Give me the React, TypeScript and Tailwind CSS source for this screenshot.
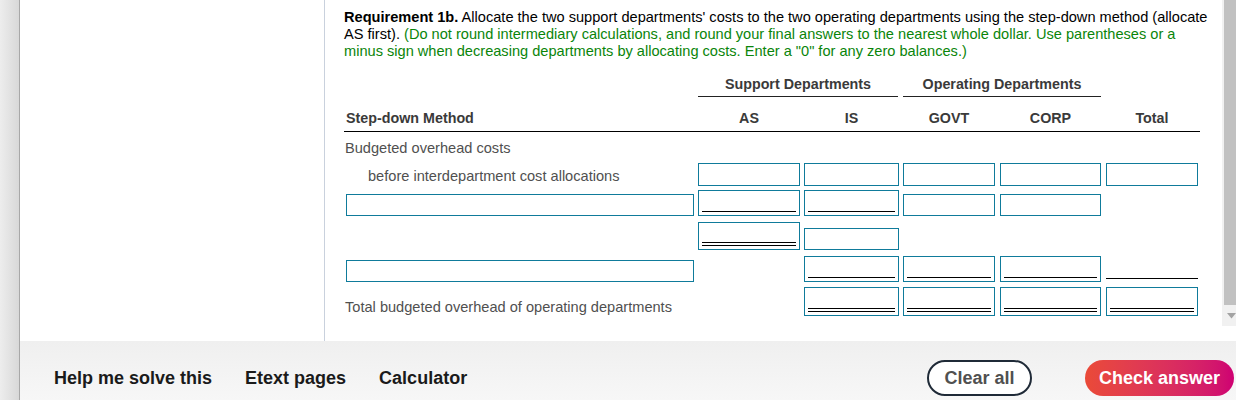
import React from "react";

const font = { fontFamily: '"Liberation Sans", Arial, sans-serif' };

// column widths, measured from left edge of table
const COLS = {
  label: "w-[354px]",
  as: "w-[106px]",
  is: "w-[99px]",
  govt: "w-[97px]",
  corp: "w-[106px]",
  total: "w-[94px]",
};

type Kind = "plain" | "single" | "double";

function Cell({ w, h, kind = "plain" }: { w: string; h: string; kind?: Kind }) {
  return (
    <div
      className={`${w} ${h} border border-[#0f7b9b] bg-white flex flex-col justify-end px-[3px] pb-[3px]`}
    >
      {kind === "single" && <div className="h-0 border-b border-black" />}
      {kind === "double" && <div className="h-[4px] border-y border-black" />}
    </div>
  );
}

function Row({ children, className }: { children: React.ReactNode; className: string }) {
  return <div className={`flex items-end ${className}`}>{children}</div>;
}

export default function App() {
  return (
    <div className="flex w-[1236px] h-[400px] overflow-hidden bg-white" style={font}>
      {/* left gray strip */}
      <div className="w-[20px] shrink-0 h-full bg-gradient-to-r from-[#ededed] to-[#d8d8d8] border-r border-[#a8a8a8]" />

      <div className="flex-1 min-w-0 flex flex-col">
        <div className="h-[341px] flex">
          {/* left panel */}
          <div className="w-[305px] shrink-0 h-full border-r border-[#c9d1dd]" />

          {/* main content */}
          <div className="flex-1 min-w-0 flex">
            <div className="flex-1 min-w-0 pl-[19px] pt-[9px]">
              <p className="text-[14.6px] leading-[17px] text-black whitespace-nowrap">
                <b>Requirement 1b.</b> Allocate the two support departments' costs to the two operating
                departments using the step-down method (allocate
                <br />
                AS first).{" "}
                <span className="text-[#0a850a]">
                  (Do not round intermediary calculations, and round your final answers to the nearest whole
                  dollar. Use parentheses or a
                  <br />
                  minus sign when decreasing departments by allocating costs. Enter a "0" for any zero balances.)
                </span>
              </p>

              {/* table */}
              <div className="w-[856px] mt-[16px] text-[14.6px] leading-[17px]">
                <div className="flex font-bold text-[14.3px] text-[#3a3a3a]">
                  <div className={COLS.label} />
                  <div className="w-[205px]">
                    <div className="w-[200px] text-center border-b border-[#222] pb-[3px]">Support Departments</div>
                  </div>
                  <div className="w-[203px]">
                    <div className="w-[198px] text-center border-b border-[#222] pb-[3px]">Operating Departments</div>
                  </div>
                </div>

                <div className="flex font-bold text-[14.3px] text-[#3a3a3a] mt-[13px] pb-[4px] border-b border-black">
                  <div className={`${COLS.label} pl-[2px]`}>Step-down Method</div>
                  <div className={`${COLS.as} pr-[4px] text-center`}>AS</div>
                  <div className={`${COLS.is} pr-[4px] text-center`}>IS</div>
                  <div className={`${COLS.govt} pr-[5px] text-center`}>GOVT</div>
                  <div className={`${COLS.corp} pr-[5px] text-center`}>CORP</div>
                  <div className={`${COLS.total} pr-[2px] text-center`}>Total</div>
                </div>

                <div className="h-[31px] pt-[8px] pl-[1px] text-[#505050]">Budgeted overhead costs</div>

                {/* row 1 */}
                <Row className="h-[23px]">
                  <div className={`${COLS.label} self-center pt-[3px] pl-[24px] text-[#505050]`}>
                    before interdepartment cost allocations
                  </div>
                  <div className={COLS.as}><Cell w="w-[102px]" h="h-[23px]" /></div>
                  <div className={COLS.is}><Cell w="w-[95px]" h="h-[23px]" /></div>
                  <div className={COLS.govt}><Cell w="w-[92px]" h="h-[23px]" /></div>
                  <div className={COLS.corp}><Cell w="w-[101px]" h="h-[23px]" /></div>
                  <div className={COLS.total}><Cell w="w-[92px]" h="h-[23px]" /></div>
                </Row>

                {/* row 2 */}
                <Row className="h-[26px] mt-[4px]">
                  <div className={`${COLS.label} pl-[2px]`}><Cell w="w-[348px]" h="h-[22px]" /></div>
                  <div className={COLS.as}><Cell w="w-[102px]" h="h-[26px]" kind="single" /></div>
                  <div className={COLS.is}><Cell w="w-[95px]" h="h-[26px]" kind="single" /></div>
                  <div className={COLS.govt}><Cell w="w-[92px]" h="h-[22px]" /></div>
                  <div className={COLS.corp}><Cell w="w-[101px]" h="h-[22px]" /></div>
                  <div className={COLS.total} />
                </Row>

                {/* row 3 */}
                <Row className="h-[28px] mt-[6px]">
                  <div className={COLS.label} />
                  <div className={COLS.as}><Cell w="w-[102px]" h="h-[28px]" kind="double" /></div>
                  <div className={COLS.is}><Cell w="w-[95px]" h="h-[22px]" /></div>
                </Row>

                {/* row 4 */}
                <Row className="h-[26px] mt-[6px]">
                  <div className={`${COLS.label} pl-[2px]`}><Cell w="w-[348px]" h="h-[22px]" /></div>
                  <div className={COLS.as} />
                  <div className={COLS.is}><Cell w="w-[95px]" h="h-[26px]" kind="single" /></div>
                  <div className={COLS.govt}><Cell w="w-[92px]" h="h-[26px]" kind="single" /></div>
                  <div className={COLS.corp}><Cell w="w-[101px]" h="h-[26px]" kind="single" /></div>
                  <div className={COLS.total}>
                    <div className="w-[92px] h-0 border-b border-black mb-[3px]" />
                  </div>
                </Row>

                {/* row 5 */}
                <Row className="h-[29px] mt-[5px]">
                  <div className={`${COLS.label} pl-[1px] mb-0 text-[#505050]`}>
                    Total budgeted overhead of operating departments
                  </div>
                  <div className={COLS.as} />
                  <div className={COLS.is}><Cell w="w-[95px]" h="h-[29px]" kind="double" /></div>
                  <div className={COLS.govt}><Cell w="w-[92px]" h="h-[29px]" kind="double" /></div>
                  <div className={COLS.corp}><Cell w="w-[101px]" h="h-[29px]" kind="double" /></div>
                  <div className={COLS.total}><Cell w="w-[92px]" h="h-[29px]" kind="double" /></div>
                </Row>
              </div>
            </div>

            {/* scrollbar */}
            <div className="w-[14px] shrink-0 h-[326px] bg-[#f1f1f1] flex flex-col">
              <div className="ml-[2px] flex-1 bg-[#c1c1c1]" />
              <div className="h-[21px] flex items-center justify-center pl-[4px]">
                <svg width="9" height="6" viewBox="0 0 9 6">
                  <path d="M0 0 H9 L4.5 5.5 Z" fill="#a3a3a3" />
                </svg>
              </div>
            </div>
          </div>
        </div>

        {/* bottom bar */}
        <div className="flex-1 bg-gradient-to-b from-[#efefef] to-[#f7f7f7] flex items-center pl-[34px] pr-[2px] pt-[15px]">
          <div className="flex gap-[33px] text-[18px] font-bold text-[#1a1a1a]">
            <span>Help me solve this</span>
            <span>Etext pages</span>
            <span>Calculator</span>
          </div>
          <div className="ml-auto flex items-center gap-[53px]">
            <button className="w-[105px] h-[36px] rounded-full border-2 border-[#1f2a37] bg-white text-[18px] font-bold text-[#505050]">
              Clear all
            </button>
            <button className="w-[149px] h-[36px] rounded-full bg-gradient-to-r from-[#ea4a37] to-[#cf0072] text-[18px] font-bold text-white">
              Check answer
            </button>
          </div>
        </div>
      </div>
    </div>
  );
}
